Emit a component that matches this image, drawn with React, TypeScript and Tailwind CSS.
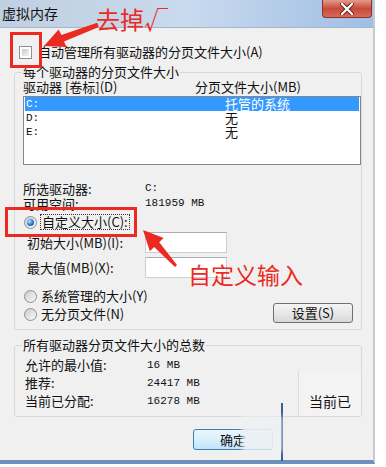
import React from "react";

function Checkbox() {
  return (
    <div className="h-[13px] w-[13px] shrink-0 border border-[#8e8f8f] bg-white p-[2px]">
      <div className="h-full w-full bg-gradient-to-br from-[#c4c8ce] to-[#f6f6f6]" />
    </div>
  );
}

function Radio({ checked = false }: { checked?: boolean }) {
  return (
    <div className="flex h-[13px] w-[13px] shrink-0 items-center justify-center rounded-full border border-[#8e8f8f] bg-gradient-to-br from-[#c9ccd1] to-[#fafafa]">
      {checked && (
        <div className="h-[7px] w-[7px] rounded-full bg-[radial-gradient(circle_at_35%_35%,#b8e4ff,#2278d0_55%,#0c4790)]" />
      )}
    </div>
  );
}

function Box() {
  return <div className="h-[21px] w-[82px] border border-[#ccd0d5] border-t-[#abadb3] bg-white" />;
}

const mono = "font-['Liberation_Mono',monospace] text-[11px]";

export default function App() {
  return (
    <div className="relative h-[467px] w-[386px] overflow-hidden bg-white font-['Noto_Sans_CJK_SC','Noto_Sans',sans-serif] text-[13px] text-[#111]">
      <div className="flex h-[464px] w-[375px] flex-col border-b-[4px] border-r-[2px] border-b-[#6d90bd] border-r-[#c5cbd3] bg-[#f0f0f0]">
        {/* title bar */}
        <div className="flex h-[28px] shrink-0 items-start justify-between border-b border-[#a3b6cd] bg-gradient-to-r from-[#c0cfe1] via-[#c9daee] to-[#a0bee4]">
          <span className="pl-[2px] pt-[4px] text-[14px] leading-[18px] text-[#111]">虚拟内存</span>
          <div className="mr-[1px] flex h-[18px] w-[50px] items-center justify-center rounded-b-[4px] border border-t-0 border-[#8a3328] bg-gradient-to-b from-[#e39a8c] via-[#c9493b] to-[#d86a57]">
            <svg width="14" height="12" viewBox="0 0 14 12">
              <path d="M2 1 L12 11 M12 1 L2 11" stroke="#5a1a12" strokeWidth="4" strokeLinecap="round" />
              <path d="M2 1 L12 11 M12 1 L2 11" stroke="#ffffff" strokeWidth="2.4" strokeLinecap="round" />
            </svg>
          </div>
        </div>

        {/* body */}
        <div className="flex flex-1 flex-col pl-[14px] pr-[11px] pt-[16px]">
          <div className="flex h-[16px] items-center">
            <div className="ml-[5px]">
              <Checkbox />
            </div>
            <span className="ml-[6px] leading-[16px]">自动管理所有驱动器的分页文件大小(A)</span>
          </div>

          <fieldset className="mt-[4px] rounded-[3px] border border-[#d5d9dd] pb-[7px] pl-[8px]">
            <legend className="-ml-[1px] px-[1px] leading-[16px]">每个驱动器的分页文件大小</legend>
            <div className="grid h-[14px] grid-cols-[172px_1fr] leading-[14px]">
              <span>驱动器 [卷标](D)</span>
              <span>分页文件大小(MB)</span>
            </div>
            <div className="mt-[2px] h-[69px] w-[338px] border border-[#828790] bg-white">
              <div className="mx-[1px] grid h-[14px] grid-cols-[199px_1fr] bg-[#3399ff] pl-[1px] leading-[14px] text-white">
                <span className={mono}>C:</span>
                <span>托管的系统</span>
              </div>
              <div className="mx-[1px] grid h-[14px] grid-cols-[199px_1fr] pl-[1px] leading-[14px]">
                <span className={mono}>D:</span>
                <span>无</span>
              </div>
              <div className="mx-[1px] grid h-[14px] grid-cols-[199px_1fr] pl-[1px] leading-[14px]">
                <span className={mono}>E:</span>
                <span>无</span>
              </div>
            </div>

            <div className="mt-[16px] grid grid-cols-[122px_1fr] leading-[15px]">
              <span className="h-[15px]">所选驱动器:</span>
              <span className={mono}>C:</span>
              <span className="h-[15px]">可用空间:</span>
              <span className={mono}>181959 MB</span>
            </div>

            <div className="mt-[3px] flex h-[16px] items-center pl-[1px]">
              <Radio checked />
              <span className="ml-[3px] border border-dotted border-[#333] px-[1px] leading-[14px]">自定义大小(C):</span>
            </div>

            <div className="mt-[2px] grid grid-cols-[122px_1fr] items-center">
              <span className="pl-[4px]">初始大小(MB)(I):</span>
              <Box />
            </div>
            <div className="mt-[4px] grid grid-cols-[122px_1fr] items-center">
              <span className="pl-[4px]">最大值(MB)(X):</span>
              <Box />
            </div>

            <div className="mt-[10px] flex items-end justify-between">
              <div className="flex flex-col gap-[2px] pl-[1px]">
                <div className="flex h-[16px] items-center">
                  <Radio />
                  <span className="ml-[4px] leading-[16px]">系统管理的大小(Y)</span>
                </div>
                <div className="flex h-[16px] items-center">
                  <Radio />
                  <span className="ml-[4px] leading-[16px]">无分页文件(N)</span>
                </div>
              </div>
              <button className="-mb-[1px] mr-[8px] flex h-[20px] w-[80px] items-center justify-center rounded-[3px] border border-[#707070] bg-gradient-to-b from-[#f4f4f4] via-[#e8e8e8] to-[#d8d8d8] leading-[16px] text-[#111]">
                设置(S)
              </button>
            </div>
          </fieldset>

          <fieldset className="mt-[7px] rounded-[3px] border border-[#d5d9dd] pb-[6px] pl-[8px]">
            <legend className="-ml-[1px] px-[1px] leading-[16px]">所有驱动器分页文件大小的总数</legend>
            <div className="grid grid-cols-[122px_1fr] pl-[2px] pt-[3px] leading-[18px]">
              <span className="h-[18px]">允许的最小值:</span>
              <span className={mono}>16 MB</span>
              <span className="h-[18px]">推荐:</span>
              <span className={mono}>24417 MB</span>
              <span className="h-[18px]">当前已分配:</span>
              <span className={mono}>16278 MB</span>
            </div>
          </fieldset>

          <div className="mt-[12px] flex">
            <button className="ml-[179px] flex h-[21px] w-[80px] items-center justify-center rounded-[3px] border border-[#3c7fb1] bg-gradient-to-b from-[#eaf6fd] via-[#d9effc] to-[#bee6fd] leading-[16px] text-[#111]">
              确定
            </button>
          </div>
        </div>
      </div>

      {/* ghost overlay artefacts */}
      <div className="absolute left-[298px] top-[371px] flex h-[45px] w-[63px] items-end border-l border-[#dcdcdc] bg-[#f3f3f3] pb-[7px] pl-[10px]">
        <span className="whitespace-nowrap text-[14px] leading-[16px]">当前已</span>
      </div>
      <div className="absolute left-[281px] top-[403px] h-[58px] w-[2px] bg-[#3b5f94]" />
      <div className="absolute left-[242px] top-[416px] h-[36px] w-[40px] bg-[#eef1f4] opacity-90 blur-[2px]" />

      {/* annotations */}
      <div className="absolute left-[10px] top-[32px] h-[36px] w-[32px] border-[3px] border-[#ec2a22]" />
      <div className="absolute left-[5px] top-[207px] h-[30px] w-[132px] border-[3px] border-[#ec2a22]" />
      <span className="absolute left-[96px] top-[4px] text-[24px] leading-[30px] text-[#ec2a22]">去掉√</span>
      <span className="absolute left-[188px] top-[259px] text-[23px] leading-[30px] text-[#ec2a22]">自定义输入</span>
      <svg className="pointer-events-none absolute left-0 top-0" width="386" height="467" viewBox="0 0 386 467">
        <polygon
          points="97.2,22.8 61.4,35.0 58.6,29.5 44,46 66.5,47.0 64.0,41.6 98.8,27.0"
          fill="#ec2a22"
        />
        <polygon
          points="177,265 159.2,242.2 163.6,238.0 143,230 149.8,251.2 154.2,247.0 175,267"
          fill="#ec2a22"
        />
      </svg>
    </div>
  );
}
